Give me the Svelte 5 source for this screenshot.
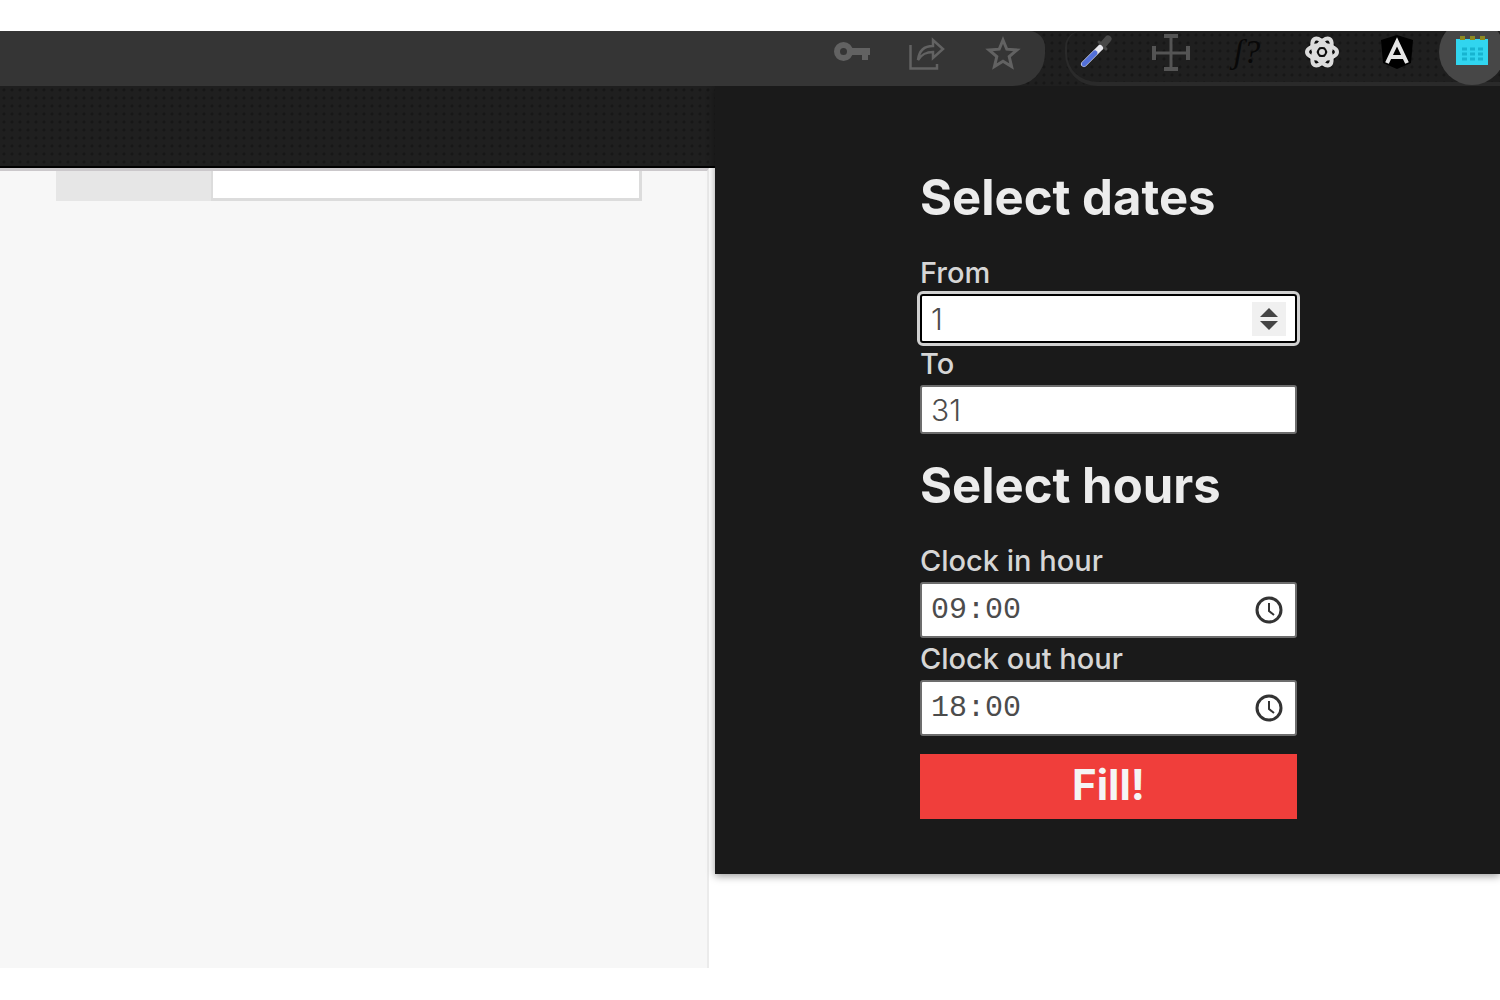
<script lang="ts">
  let fromDay = 1;
  let toDay = 31;
  let clockIn = "09:00";
  let clockOut = "18:00";

  function step(amount: number) {
    fromDay = Math.min(31, Math.max(1, fromDay + amount));
  }
</script>

<div class="browser">
  <header class="toolbar">
    <div class="address-bar">
      <button class="tool" aria-label="Passwords">
        <svg width="60" height="42" viewBox="0 0 60 42">
          <path fill="none" stroke="#626262" stroke-width="6" d="M27 20.500a6.500 6.500 0 1 1-13 0a6.500 6.500 0 1 1 13 0z" />
          <path fill="#626262" d="M26 17h21v7h-2v5h-6v-5H26z" />
        </svg>
      </button>
      <button class="tool" aria-label="Share">
        <svg width="60" height="42" viewBox="0 0 60 42" fill="none" stroke="#626262" stroke-width="2.500">
          <path d="M12.500 14v23.500H39V33" />
          <path d="M20 29c1-9 6-14 15-14V9l10 9-10 9v-6c-7 0-11 2-15 8z" />
        </svg>
      </button>
      <button class="tool" aria-label="Bookmark">
        <svg width="60" height="42" viewBox="0 0 60 42">
          <path fill="none" stroke="#626262" stroke-width="3" d="M30 9l3.800 9.200 10.200.8-7.800 6.600 2.400 10L30 30.300l-8.600 5.300 2.400-10L16 19l10.200-.8z" />
        </svg>
      </button>
    </div>

    <div class="extensions">
      <button class="tool" aria-label="Color picker">
        <svg width="60" height="42" viewBox="0 0 60 42" stroke-linecap="round">
          <path stroke="#484848" stroke-width="7" d="M35 15l6-7" />
          <path stroke="#484848" stroke-width="3" d="M32 11l7 7" />
          <path stroke="#e8e8ee" stroke-width="6" d="M17 33l16-16" />
          <path stroke="#5370d8" stroke-width="5" d="M17 33l11-11" />
        </svg>
      </button>
      <button class="tool" aria-label="Page ruler">
        <svg width="60" height="42" viewBox="0 0 60 42" stroke="#545454" stroke-width="3">
          <path d="M29 5v34M11 22h36" />
          <path stroke-width="4" d="M22 5h14M22 38h14M12 15v14M46 15v14" />
        </svg>
      </button>
      <button class="tool formula">ʃ?</button>
      <button class="tool" aria-label="React tools">
        <svg width="60" height="42" viewBox="0 0 60 42" fill="none" stroke="#dcdcdc" stroke-width="4">
          <circle cx="30" cy="21" r="15" fill="#0c0c0c" stroke="none" />
          <ellipse cx="30" cy="21" rx="15" ry="7" />
          <ellipse cx="30" cy="21" rx="15" ry="7" transform="rotate(60 30 21)" />
          <ellipse cx="30" cy="21" rx="15" ry="7" transform="rotate(120 30 21)" />
          <circle cx="30" cy="21" r="3" fill="#dcdcdc" stroke="none" />
        </svg>
      </button>
      <button class="tool" aria-label="Angular tools">
        <svg width="60" height="42" viewBox="0 0 60 42">
          <path fill="#000" d="M30 4l16 5-2 23-14 6-14-6-2-23z" />
          <path fill="none" stroke="#e6e6e6" stroke-width="4" d="M20 32l10-21 10 21M24 26h12" />
        </svg>
      </button>
      <button class="tool active" aria-label="Timesheet filler">
        <svg width="60" height="42" viewBox="0 0 60 42">
          <circle cx="30" cy="21" r="33" fill="#474747" />
          <path fill="#31d5ef" d="M14 8h32v26H14z" />
          <path stroke="#8d8a20" stroke-width="4" d="M18 7h5M28 7h5M38 7h5" />
          <path stroke="#17b4d0" stroke-width="3" stroke-dasharray="5 3" d="M20 18h21M20 23h21M20 28h21" />
        </svg>
      </button>
    </div>
  </header>

  <div class="viewport">
    <div class="bookmarks"></div>
    <main class="page">
      <div class="row">
        <div class="row-label"></div>
        <div class="row-value"></div>
      </div>
    </main>

    <section class="popup">
      <form on:submit|preventDefault>
        <h2>Select dates</h2>
        <label for="from">From</label>
        <div class="field focused">
          <input id="from" type="number" min="1" max="31" bind:value={fromDay} />
          <div class="spinner">
            <button type="button" aria-label="Increase" on:click={() => step(1)}>
              <svg width="18" height="9" viewBox="0 0 18 9"><path fill="#444" d="M0 9l9-9 9 9z" /></svg>
            </button>
            <button type="button" aria-label="Decrease" on:click={() => step(-1)}>
              <svg width="18" height="9" viewBox="0 0 18 9"><path fill="#444" d="M0 0l9 9 9-9z" /></svg>
            </button>
          </div>
        </div>
        <label for="to">To</label>
        <div class="field">
          <input id="to" type="number" min="1" max="31" bind:value={toDay} />
        </div>

        <h2>Select hours</h2>
        <label for="clock-in">Clock in hour</label>
        <div class="field time">
          <input id="clock-in" type="text" bind:value={clockIn} />
          <button type="button" aria-label="Pick clock in hour">
            <svg width="28" height="28" viewBox="0 0 28 28" fill="none" stroke="#333" stroke-width="3">
              <circle cx="14" cy="14" r="12" />
              <path stroke-width="2" d="M14 7v8l5 4" />
            </svg>
          </button>
        </div>
        <label for="clock-out">Clock out hour</label>
        <div class="field time">
          <input id="clock-out" type="text" bind:value={clockOut} />
          <button type="button" aria-label="Pick clock out hour">
            <svg width="28" height="28" viewBox="0 0 28 28" fill="none" stroke="#333" stroke-width="3">
              <circle cx="14" cy="14" r="12" />
              <path stroke-width="2" d="M14 7v8l5 4" />
            </svg>
          </button>
        </div>
        <button type="submit" class="fill">Fill!</button>
      </form>
    </section>
  </div>
</div>

<style>
  :global(body) {
    margin: 0;
    background: #fff;
  }

  .browser {
    display: flex;
    flex-direction: column;
    box-sizing: border-box;
    min-height: 100vh;
    padding: 31px 0 32px;
    overflow: hidden;
    font-family: Inter, "Noto Sans", sans-serif;
  }

  button {
    padding: 0;
    border: none;
    background: none;
    cursor: pointer;
  }

  svg {
    display: block;
  }

  .toolbar,
  .bookmarks {
    background-color: #1f1f1f;
    background-image: radial-gradient(#171717 1px, transparent 2px);
    background-size: 8px 8px;
  }

  .toolbar {
    position: relative;
    z-index: 1;
    display: flex;
    gap: 20px;
    height: 55px;
    overflow: hidden;
  }

  .address-bar {
    display: flex;
    flex: 1;
    justify-content: flex-end;
    gap: 15px;
    padding-right: 12px;
    background: #353535;
    border-radius: 0 16px 32px 0;
  }

  .extensions {
    display: flex;
    gap: 15px;
    width: 435px;
    box-sizing: border-box;
    border-left: 2px solid #2a2a2a;
    border-bottom: 4px solid #2a2a2a;
    border-radius: 16px 0 0 32px;
  }

  .tool {
    flex: none;
    width: 60px;
    height: 42px;
  }

  .active svg {
    overflow: visible;
  }

  .formula {
    color: #080808;
    font: italic 34px/42px "Liberation Serif", serif;
  }

  .viewport {
    position: relative;
    display: flex;
    flex: 1;
    flex-direction: column;
  }

  .bookmarks {
    height: 80px;
    border-bottom: 2px solid #000;
  }

  .page {
    flex: 1;
    margin-right: 791px;
    background: #f7f7f7;
    border-top: 3px solid #cbc8cb;
    border-right: 2px solid #ebebeb;
  }

  .row {
    display: flex;
    height: 30px;
    padding: 0 65px 0 56px;
  }

  .row-label {
    width: 155px;
    background: #e6e6e6;
  }

  .row-value {
    flex: 1;
    background: #fff;
    border: solid #dcdcdc;
    border-width: 0 3px 3px 2px;
  }

  .popup {
    position: absolute;
    top: 0;
    right: 0;
    display: flex;
    justify-content: center;
    width: 785px;
    padding: 84px 0 55px 2px;
    box-sizing: border-box;
    background: #1a1a1a;
    box-shadow: 0 2px 8px rgba(0, 0, 0, 0.4);
  }

  form {
    display: flex;
    flex-direction: column;
    width: 377px;
  }

  h2 {
    margin: 0 0 26px;
    color: #ececec;
    font-size: 49px;
    font-weight: 700;
    line-height: 56px;
    white-space: nowrap;
  }

  .field + h2 {
    margin-top: 24px;
  }

  label {
    color: #d6d6d6;
    font-size: 29px;
    font-weight: 500;
    line-height: 42px;
  }

  .field {
    display: flex;
    align-items: center;
    height: 49px;
    padding: 0 12px 0 9px;
    box-sizing: border-box;
    background: #fff;
    border: 2px solid #6d6d6d;
    border-radius: 3px;
  }

  .focused {
    padding-right: 9px;
    border-color: #000;
    outline: 3px solid #d0d0d0;
  }

  .time {
    height: 56px;
  }

  input {
    flex: 1;
    min-width: 0;
    padding: 0;
    border: none;
    outline: none;
    background: none;
    color: #4c4c4c;
    font: 300 30px/40px Inter, sans-serif;
    appearance: textfield;
  }

  .time input {
    font: 30px/40px "Liberation Mono", monospace;
  }

  .spinner {
    display: flex;
    flex-direction: column;
    align-items: center;
    justify-content: center;
    gap: 4px;
    width: 34px;
    height: 34px;
    background: #f0f0f0;
  }

  .fill {
    height: 65px;
    margin-top: 18px;
    padding-bottom: 4px;
    background: #f03e3b;
    color: #f5f5f5;
    font: 700 42px/56px Inter, sans-serif;
  }
</style>
